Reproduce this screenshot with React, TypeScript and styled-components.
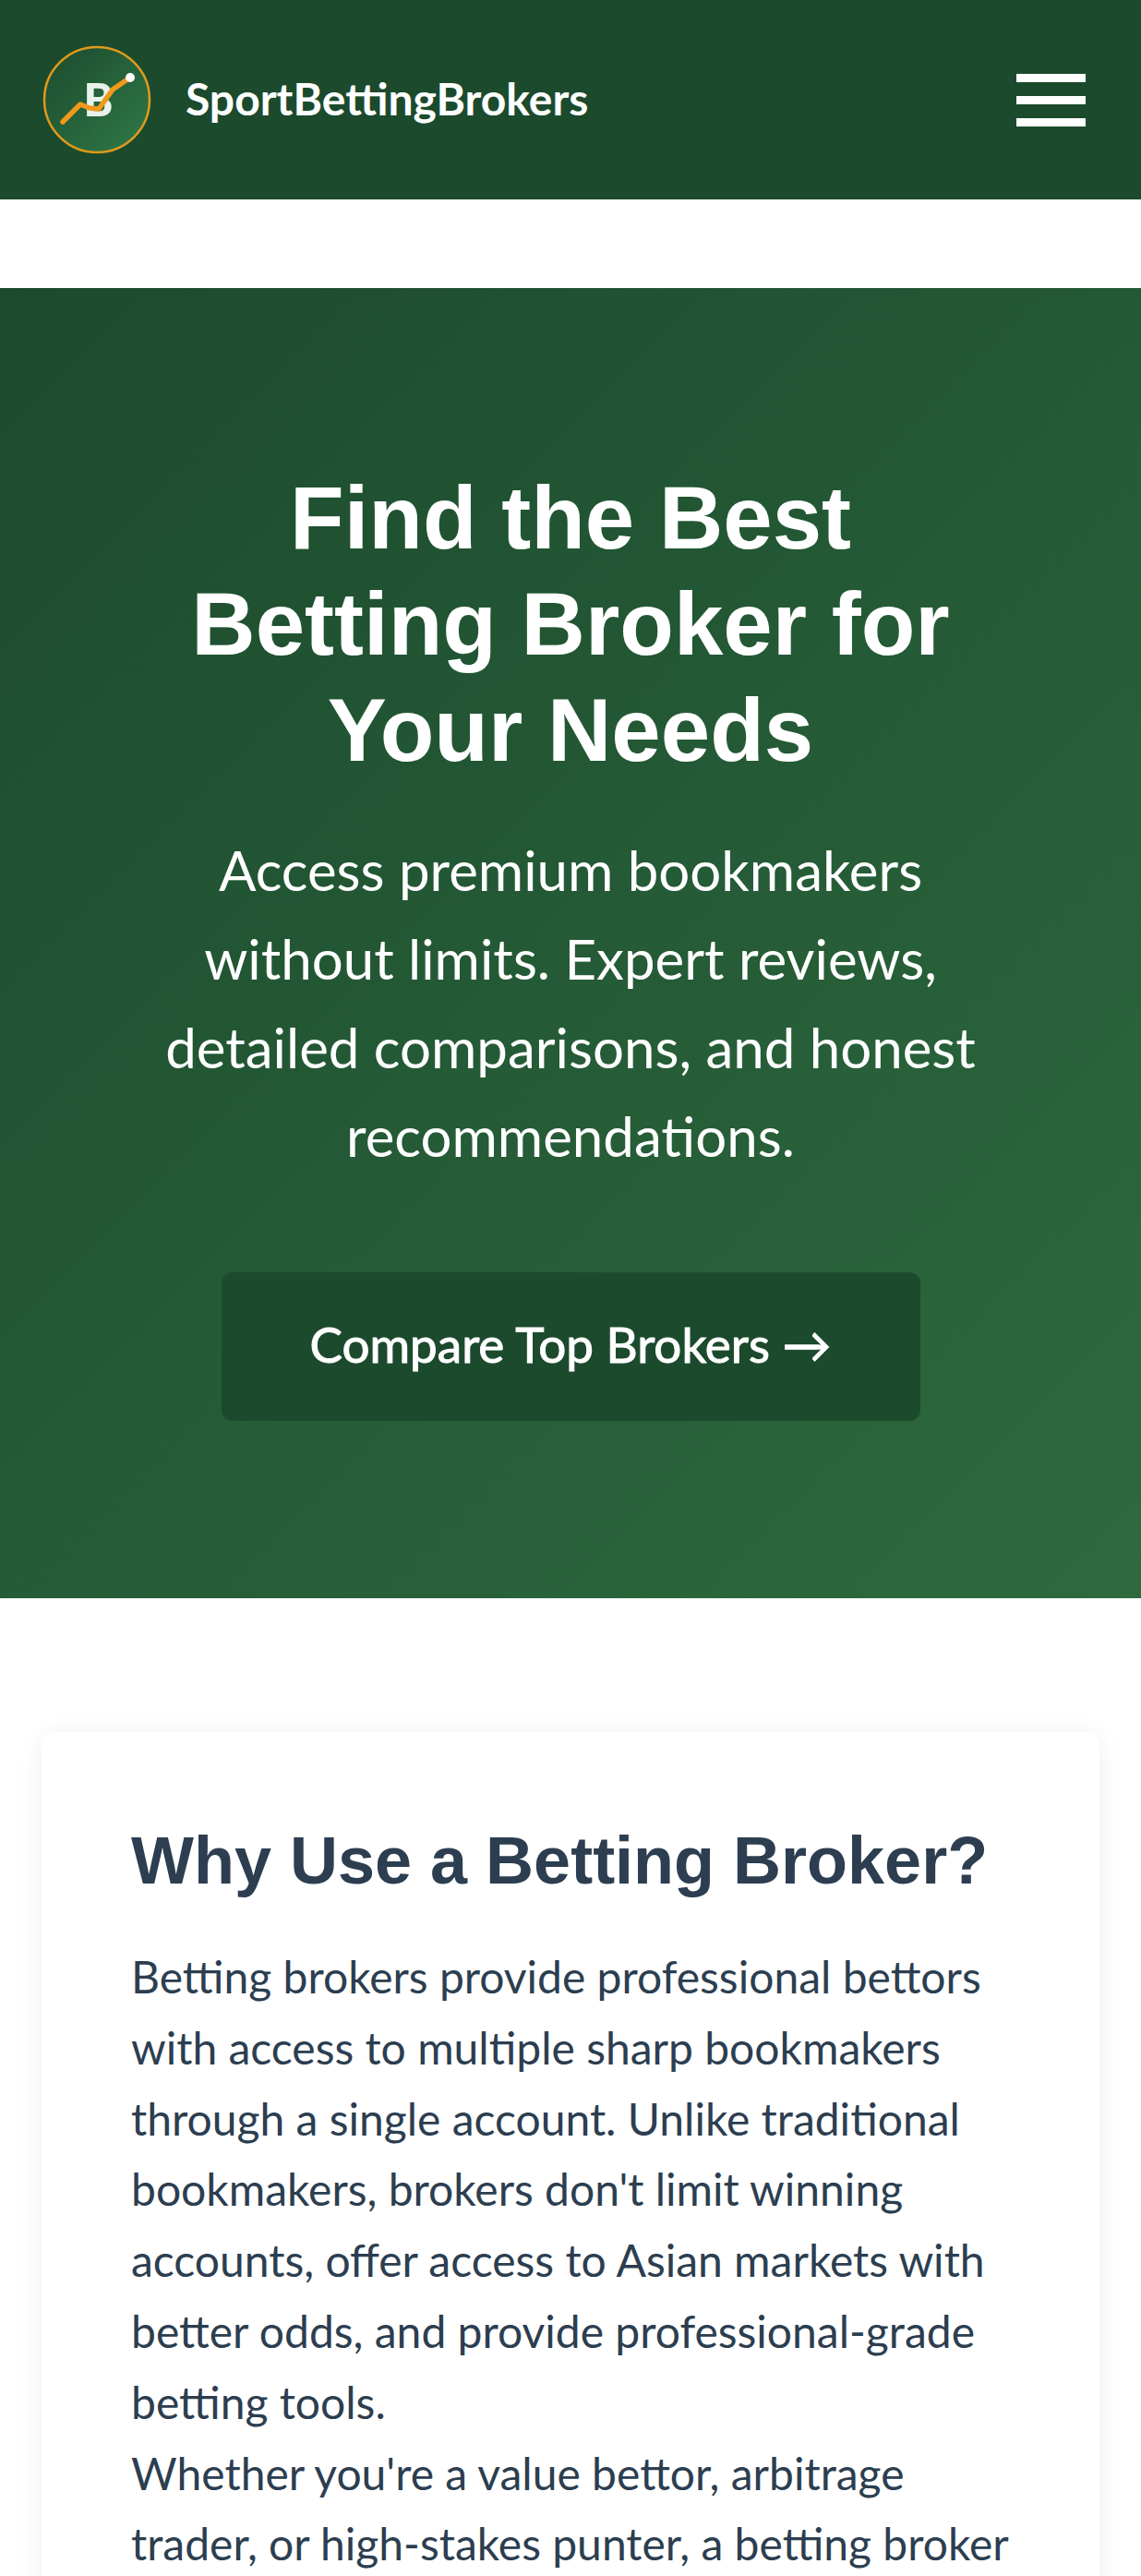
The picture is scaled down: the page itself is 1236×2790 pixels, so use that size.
import styled, { createGlobalStyle } from "styled-components";

const GlobalStyle = createGlobalStyle`
  html, body {
    margin: 0;
    padding: 0;
    background: #ffffff;
  }
  body {
    font-family: "Lato", "Liberation Sans", sans-serif;
    font-feature-settings: "liga" 1;
    overflow: hidden;
  }
`;

const Page = styled.div`
  width: 1236px;
  height: 2790px;
  overflow: hidden;
`;

const Header = styled.header`
  height: 216px;
  box-sizing: border-box;
  padding: 0 60px 0 45px;
  display: flex;
  align-items: center;
  justify-content: space-between;
  background: #1c4a2d;
`;

const Brand = styled.a`
  display: flex;
  align-items: center;
  gap: 36px;
  color: #ffffff;
  font-size: 48px;
  font-weight: 700;
  line-height: 56px;
`;

const BrandName = styled.span`
  padding-bottom: 3px;
`;

const BurgerButton = styled.button`
  width: 75px;
  display: flex;
  flex-direction: column;
  gap: 15px;
  padding: 1px 0 0;
  border: 0;
  background: none;
`;

const BurgerBar = styled.span`
  height: 9px;
  background: #ffffff;
`;

const Hero = styled.section`
  margin-top: 96px;
  height: 1419px;
  box-sizing: border-box;
  padding: 191px 140px 0;
  text-align: center;
  color: #ffffff;
  background: linear-gradient(135deg, #1c4a2d 0%, #2d6a3e 100%);
`;

const HeroTitle = styled.h1`
  margin: 0 0 46px;
  font-family: "Liberation Sans", Arial, sans-serif;
  font-size: 96px;
  line-height: 115px;
  font-weight: 700;
`;

const HeroText = styled.p`
  margin: 0 0 100px;
  font-size: 60px;
  line-height: 96px;
`;

const HeroButton = styled.a`
  width: 757px;
  height: 161px;
  box-sizing: border-box;
  margin: 0 auto;
  padding-bottom: 6px;
  display: flex;
  align-items: center;
  justify-content: center;
  border-radius: 12px;
  background: #1c4a2d;
  color: #ffffff;
  font-size: 53px;
  font-weight: 400;
  -webkit-text-stroke: 1px #ffffff;
`;

const Main = styled.main`
  padding: 145px 45px 0;
`;

const Card = styled.article`
  box-sizing: border-box;
  padding: 96px 97px;
  border-radius: 14px;
  background: #ffffff;
  box-shadow: 0 4px 28px rgba(0, 0, 0, 0.07);
  color: #2c3e50;
`;

const CardTitle = styled.h2`
  margin: 0 0 45px;
  font-family: "Liberation Sans", Arial, sans-serif;
  font-size: 72px;
  line-height: 86px;
  font-weight: 700;
`;

const CardText = styled.p`
  margin: 0;
  font-size: 48px;
  line-height: 76.8px;
`;

const Logo = () => (
  <svg width="120" height="120" viewBox="0 0 120 120">
    <defs>
      <linearGradient id="logoFill" x1="0" y1="0" x2="1" y2="1">
        <stop offset="0" stopColor="#1c4a2d" />
        <stop offset="1" stopColor="#2f7a47" />
      </linearGradient>
    </defs>
    <circle cx="60" cy="60" r="57" fill="url(#logoFill)" stroke="#e09a1c" strokeWidth="2.5" />
    <text x="62" y="78" textAnchor="middle" fontFamily="Roboto, sans-serif" fontSize="50" fontWeight="700" fill="#e8f2ea">
      B
    </text>
    <polyline
      points="23,84 42,65 52,69 62,70 77,49 96,36"
      fill="none"
      stroke="#f0991c"
      strokeWidth="5.5"
      strokeLinecap="round"
      strokeLinejoin="round"
    />
    <circle cx="96" cy="36" r="5" fill="#ffffff" />
  </svg>
);

const App = () => {
  return (
    <Page>
      <GlobalStyle />
      <Header>
        <Brand>
          <Logo />
          <BrandName>SportBettingBrokers</BrandName>
        </Brand>
        <BurgerButton aria-label="Menu">
          <BurgerBar />
          <BurgerBar />
          <BurgerBar />
        </BurgerButton>
      </Header>

      <Hero>
        <HeroTitle>Find the Best Betting Broker for Your Needs</HeroTitle>
        <HeroText>
          Access premium bookmakers without limits. Expert reviews, detailed comparisons, and honest recommendations.
        </HeroText>
        <HeroButton>Compare Top Brokers →</HeroButton>
      </Hero>

      <Main>
        <Card>
          <CardTitle>Why Use a Betting Broker?</CardTitle>
          <CardText>
            Betting brokers provide professional bettors with access to multiple sharp bookmakers through a single
            account. Unlike traditional bookmakers, brokers don't limit winning accounts, offer access to Asian markets
            with better odds, and provide professional-grade betting tools.
          </CardText>
          <CardText>
            Whether you're a value bettor, arbitrage trader, or high-stakes punter, a betting broker
          </CardText>
        </Card>
      </Main>
    </Page>
  );
};

export default App;
